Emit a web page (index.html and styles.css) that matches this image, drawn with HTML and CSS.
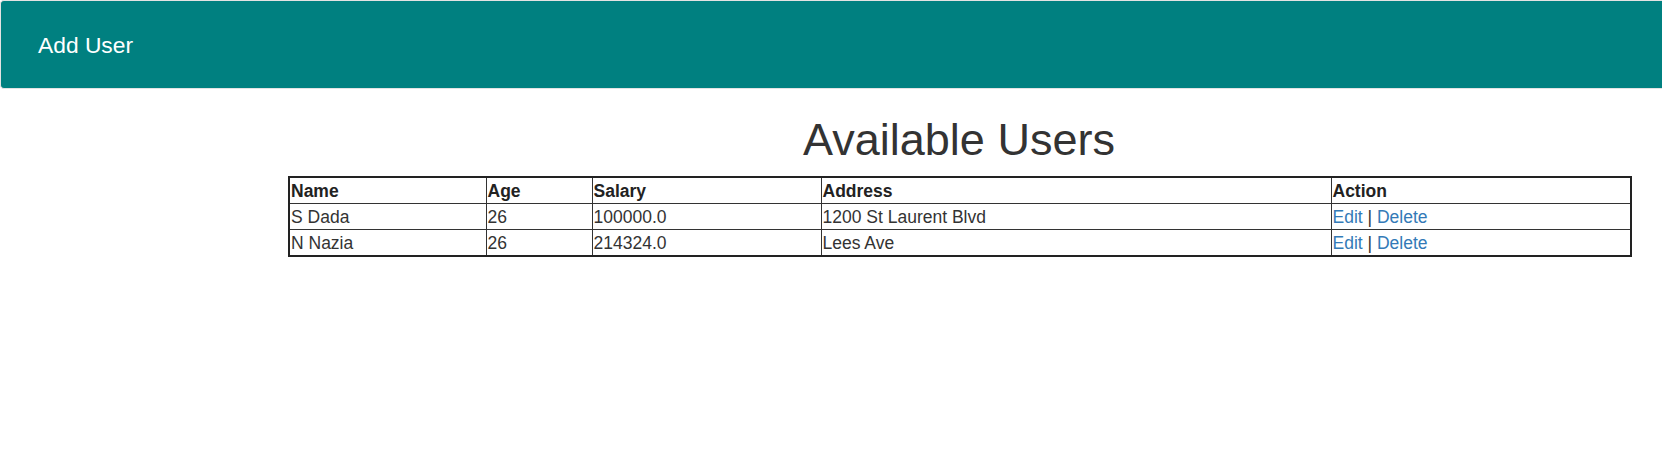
FILE: index.html
```html
<!DOCTYPE html>
<html>
<head>
<meta charset="utf-8">
<title>Users</title>
<link rel="stylesheet" href="styles.css">
</head>
<body>
<nav class="navbar">
  <a class="brand" href="#">Add User</a>
</nav>
<main class="content">
  <h1 class="title">Available Users</h1>
  <table class="users">
    <colgroup>
      <col class="c-name">
      <col class="c-age">
      <col class="c-salary">
      <col class="c-address">
      <col class="c-action">
    </colgroup>
    <thead>
      <tr><th>Name</th><th>Age</th><th>Salary</th><th>Address</th><th>Action</th></tr>
    </thead>
    <tbody>
      <tr><td>S Dada</td><td>26</td><td>100000.0</td><td>1200 St Laurent Blvd</td><td><a href="#">Edit</a> | <a href="#">Delete</a></td></tr>
      <tr><td>N Nazia</td><td>26</td><td>214324.0</td><td>Lees Ave</td><td><a href="#">Edit</a> | <a href="#">Delete</a></td></tr>
    </tbody>
  </table>
</main>
</body>
</html>
```

FILE: styles.css
```css
html, body {
  margin: 0;
  padding: 0;
  background: #fff;
}
body {
  font-family: "Liberation Sans", Arial, sans-serif;
  color: #333;
}
.navbar {
  display: flex;
  align-items: center;
  height: 87px;
  background: #008080;
  border: 1px solid #e3e3e3;
  border-right: none;
  border-radius: 4px 0 0 4px;
  padding-left: 37px;
}
.brand {
  color: #fff;
  font-size: 22.8px;
  line-height: 26px;
  text-decoration: none;
}
.content {
  display: flex;
  flex-direction: column;
  align-items: stretch;
  width: 1342px;
  margin-left: 288px;
  padding-top: 26px;
}
.title {
  margin: 0 0 11px 0;
  font-size: 45px;
  line-height: 50px;
  font-weight: normal;
  text-align: center;
  color: #333;
}
.users {
  width: 1342px;
  table-layout: fixed;
  border-collapse: collapse;
  border: 2px solid #222;
  font-size: 17.5px;
  line-height: 24px;
}
.c-name { width: 197px; }
.c-age { width: 106px; }
.c-salary { width: 229px; }
.c-address { width: 510px; }
.c-action { width: 300px; }
.users th,
.users td {
  border: 1px solid #333;
  padding: 1px 1px 0 1px;
  text-align: left;
  color: #333;
  white-space: nowrap;
}
.users th {
  font-weight: bold;
  color: #222;
}
.users a {
  color: #337ab7;
  text-decoration: none;
}
```
